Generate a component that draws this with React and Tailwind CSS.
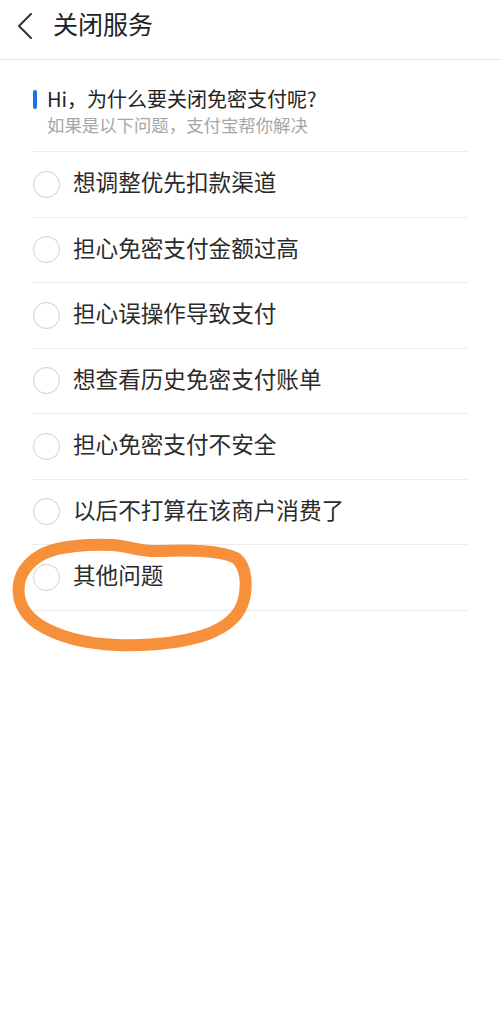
import React from 'react'

const REASONS = [
  '想调整优先扣款渠道',
  '担心免密支付金额过高',
  '担心误操作导致支付',
  '想查看历史免密支付账单',
  '担心免密支付不安全',
  '以后不打算在该商户消费了',
  '其他问题',
]

const FONT = { fontFamily: '"Noto Sans CJK SC", "Noto Sans", sans-serif' }

export default function App() {
  return (
    <div className="relative min-h-[1015px] w-[500px] bg-white" style={FONT}>
      {/* Header */}
      <div className="flex h-[60px] items-start border-b border-[#e6e6e6] pt-[6px]">
        <svg width="16" height="26" viewBox="0 0 16 26" className="ml-[17px] mt-[7px]">
          <path d="M14 1 L2 13 L14 25" fill="none" stroke="#333" strokeWidth="2" strokeLinecap="round" strokeLinejoin="round" />
        </svg>
        <h1 className="ml-[20px] text-[25px] leading-[34px] text-[#222]">关闭服务</h1>
      </div>

      <div className="mx-[32px]">
        {/* Question title */}
        <div className="border-b border-[#ececec] pt-[25px] pb-[14px]">
          <div className="flex items-center">
            <span className="ml-[1px] h-[19px] w-[4px] rounded-full bg-[#1a73e8]" />
            <span className="ml-[10px] text-[20px] leading-[28px] text-[#222]">Hi，为什么要关闭免密支付呢?</span>
          </div>
          <p className="ml-[15px] text-[17.4px] leading-[24px] text-[#a6a6a6]">如果是以下问题，支付宝帮你解决</p>
        </div>

        {/* Reasons */}
        {REASONS.map(r => (
          <div key={r} className="flex h-[65.5px] items-center border-b border-[#ececec]">
            <span className="ml-[1px] h-[27px] w-[27px] shrink-0 rounded-full border-[1.5px] border-[#cfcfcf]" />
            <span className="ml-[13px] -mt-[3px] text-[22.6px] leading-none text-[#2b2b2b]">{r}</span>
          </div>
        ))}
      </div>

      {/* hand-drawn orange circle */}
      <svg className="pointer-events-none absolute left-0 top-0" width="500" height="1015">
        <path
          d="M45 553 C60 546 90 544 112 545 C130 546 140 552 160 551 C190 550 220 550 236 558 C247 567 247 586 244 599 C240 616 225 628 205 635 C180 643 150 646 117 645 C90 644 60 638 38 624 C22 613 17 598 19 584 C21 570 32 559 45 553 Z"
          fill="none"
          stroke="#f7903a"
          strokeWidth="12"
          strokeLinejoin="round"
        />
      </svg>
    </div>
  )
}
